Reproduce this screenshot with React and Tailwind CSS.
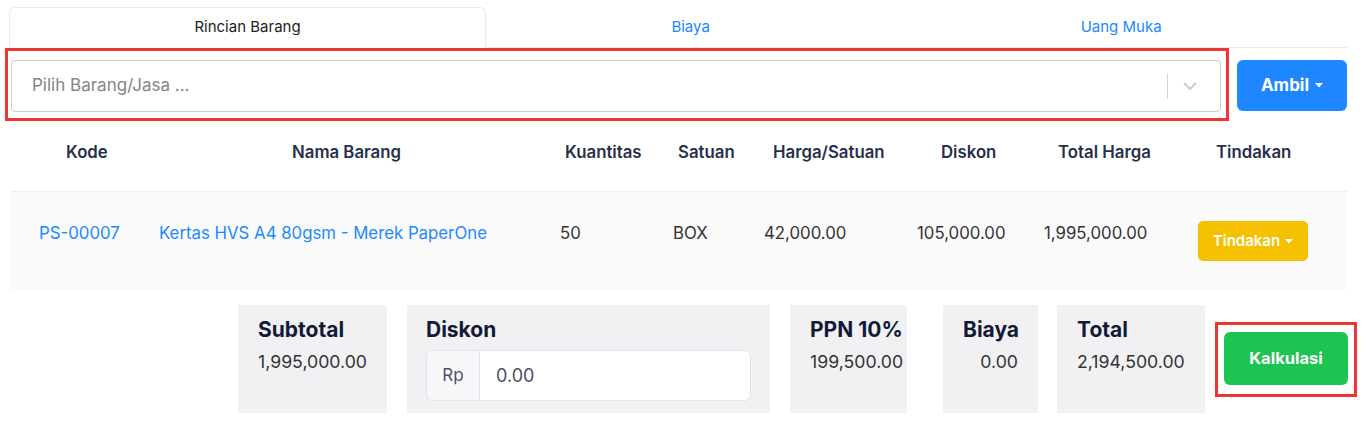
import React from "react";

const headers = [
  { label: "Kode", w: "w-[136px]", pl: "pl-[55px]" },
  { label: "Nama Barang", w: "w-[398px]", pl: "pl-[145px]" },
  { label: "Kuantitas", w: "w-[115px]", pl: "pl-[20px]" },
  { label: "Satuan", w: "w-[90px]", pl: "pl-[18px]" },
  { label: "Harga/Satuan", w: "w-[150px]", pl: "pl-[23px]" },
  { label: "Diskon", w: "w-[130px]", pl: "pl-[41px]" },
  { label: "Total Harga", w: "w-[150px]", pl: "pl-[28px]" },
  { label: "Tindakan", w: "w-[167px]", pl: "pl-[36px]" },
];

function Caret({ className = "" }) {
  return (
    <svg width="8" height="5" viewBox="0 0 8 5" className={className}>
      <path d="M0 0h8L4 4.5z" fill="currentColor" />
    </svg>
  );
}

function SummaryBox({ title, value, className = "", align = "text-left" }) {
  return (
    <div className={`bg-[#f1f1f4] h-[108px] px-[20px] pt-[11px] whitespace-nowrap ${align} ${className}`}>
      <div className="text-[21px] leading-[28px] font-bold text-[#141a36]">{title}</div>
      <div className="mt-[5px] text-[17.7px] leading-[26px] text-[#333]">{value}</div>
    </div>
  );
}

export default function App() {
  return (
    <div className="w-[1367px] h-[423px] bg-white font-['Inter',sans-serif] overflow-hidden">
      {/* tabs */}
      <div className="pt-[7px] pl-[9px] w-[1347px]">
        <div className="flex border-b border-[#e9ebee]">
          <div className="flex-auto text-center text-[15px] leading-[20px] py-[9px] -mb-px bg-white border border-[#e9ebee] border-b-white rounded-t-[6px] text-[#222]">
            Rincian Barang
          </div>
          <div className="flex-auto text-center text-[15px] leading-[20px] py-[9px] border border-transparent text-[#2188ff]">
            Biaya
          </div>
          <div className="flex-auto text-center text-[15px] leading-[20px] py-[9px] border border-transparent text-[#2188ff]">
            Uang Muka
          </div>
        </div>
      </div>

      {/* select row */}
      <div className="flex items-start">
        <div className="ml-[5px] w-[1224px] h-[73px] border-[3px] border-[#ef3434] pl-[3px] pr-[5px] pt-[9px]">
          <div className="h-[52px] border border-[#cccccc] rounded-[4px] flex items-center bg-white">
            <div className="flex-1 pl-[20px] text-[17px] text-[#858585]">Pilih Barang/Jasa ...</div>
            <div className="w-px h-[25px] bg-[#d4d4d4]" />
            <div className="w-[52px] pl-[14px] flex text-[#cccccc]">
              <svg width="16" height="10" viewBox="0 0 16 10" fill="none">
                <path d="M2 2l6 6 6-6" stroke="currentColor" strokeWidth="2" />
              </svg>
            </div>
          </div>
        </div>
        <button className="ml-[8px] mt-[12px] w-[110px] h-[51px] rounded-[6px] bg-[#1e87ff] text-white text-[17px] font-bold flex items-center justify-center gap-[6px]">
          Ambil
          <Caret />
        </button>
      </div>

      {/* table */}
      <div className="ml-[11px] w-[1336px]">
        <div className="flex h-[71px] pt-[19px] border-b border-[#eeeeee]">
          {headers.map((h) => (
            <div key={h.label} className={`${h.w} ${h.pl} shrink-0 text-[16.8px] leading-[24px] font-semibold text-[#27304a] whitespace-nowrap`}>
              {h.label}
            </div>
          ))}
        </div>
        <div className="flex h-[98px] pt-[29px] bg-[#fafafa] text-[16.8px] leading-[24px] text-[#333]">
          <div className="w-[136px] pl-[28px] shrink-0 text-[#2188ff]">PS-00007</div>
          <div className="w-[398px] pl-[12px] shrink-0 text-[#2188ff] whitespace-nowrap">Kertas HVS A4 80gsm - Merek PaperOne</div>
          <div className="w-[115px] pl-[15px] shrink-0">50</div>
          <div className="w-[90px] pl-[13px] shrink-0">BOX</div>
          <div className="w-[150px] pl-[14px] shrink-0">42,000.00</div>
          <div className="w-[130px] pl-[17px] shrink-0">105,000.00</div>
          <div className="w-[150px] pl-[14px] shrink-0 whitespace-nowrap">1,995,000.00</div>
          <div className="w-[167px] pl-[18px] shrink-0">
            <button className="w-[110px] h-[40px] rounded-[5px] bg-[#f5c000] text-white text-[15px] font-semibold flex items-center justify-center gap-[5px]">
              Tindakan
              <Caret />
            </button>
          </div>
        </div>
      </div>

      {/* summary */}
      <div className="flex items-center mt-[15px] ml-[238px]">
        <SummaryBox title="Subtotal" value="1,995,000.00" className="w-[149px]" />
        <div className="ml-[20px] w-[363px] h-[108px] bg-[#f1f1f4] pl-[19px] pt-[11px]">
          <div className="text-[21px] leading-[28px] font-bold text-[#141a36]">Diskon</div>
          <div className="mt-[6px] flex w-[325px] h-[51px]">
            <div className="w-[54px] flex items-center justify-center bg-[#f8f8fa] border border-[#e0e3ec] rounded-l-[6px] text-[17px] text-[#4a5168]">
              Rp
            </div>
            <div className="flex-1 flex items-center pl-[16px] bg-white border border-l-0 border-[#e0e3ec] rounded-r-[6px] text-[18px] text-[#4a5168]">
              0.00
            </div>
          </div>
        </div>
        <SummaryBox title="PPN 10%" value="199,500.00" className="ml-[20px] w-[117px]" />
        <SummaryBox title="Biaya" value="0.00" className="ml-[36px] w-[95px]" align="text-right" />
        <SummaryBox title="Total" value="2,194,500.00" className="ml-[19px] w-[148px]" />
        <div className="ml-[10px] w-[142px] h-[75px] border-[3px] border-[#ef3434] pl-[6px] pt-[7px]">
          <button className="w-[124px] h-[53px] rounded-[6px] bg-[#1ec452] text-white text-[16.5px] font-bold">
            Kalkulasi
          </button>
        </div>
      </div>
    </div>
  );
}
